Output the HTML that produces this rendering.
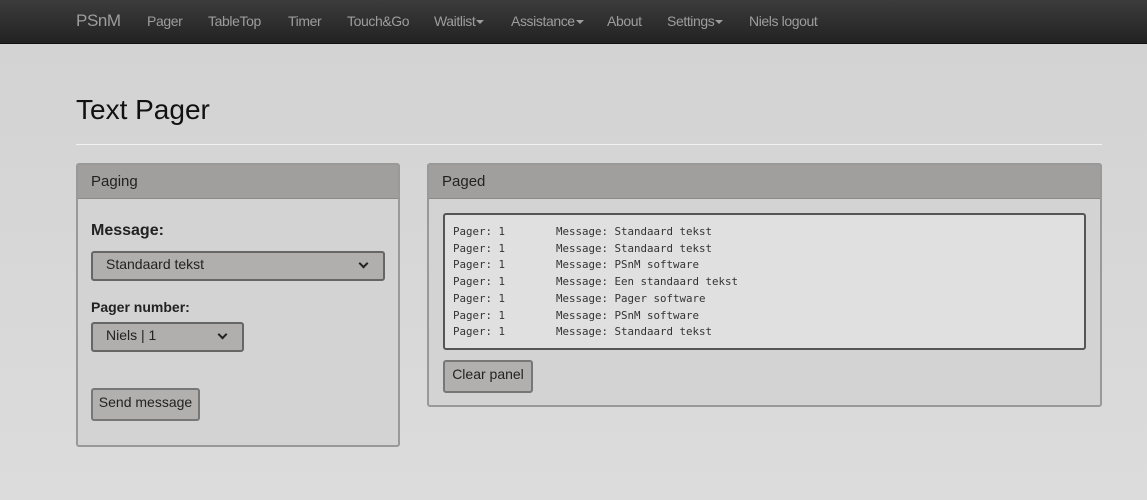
<!DOCTYPE html>
<html><head><meta charset="utf-8"><style>
*{box-sizing:border-box;margin:0;padding:0}
body{width:1147px;height:500px;overflow:hidden;font-family:"Liberation Sans",sans-serif;background:linear-gradient(#d2d2d2,#dcdcdc);position:relative;color:#222}
.nav{height:44px;background:linear-gradient(#3c3c3c,#222);border-bottom:1px solid #111;position:relative}
.nav span{position:absolute;top:13px;font-size:14px;color:#9d9d9d;letter-spacing:-0.4px}
.nav .brand{font-size:17px;top:11px;left:76px}
.caret{display:inline-block;border-top:4px solid #9d9d9d;border-left:4px solid transparent;border-right:4px solid transparent;vertical-align:middle;margin-left:1px}
h1{position:absolute;left:76px;top:94px;font-weight:normal;font-size:28px;color:#111}
.hr{position:absolute;left:76px;top:144px;width:1026px;height:1px;background:#f2f2f2}
.panel{position:absolute;border:2px solid #999;border-radius:3px;background:#d3d3d3}
.ph{height:34px;background:#a09f9d;border-bottom:1px solid #8a8a8a;font-size:15px;padding:8px 13px;color:#222}
.sel{position:absolute;background:#b0afad;border:2px solid #666;border-radius:3px;font-size:14px;padding:3px 13px}
.chev{position:absolute;right:16px;top:7px;width:7px;height:7px;border-right:2px solid #222;border-bottom:2px solid #222;transform:rotate(45deg)}
.btn{position:absolute;background:#b1b0ae;border:2px solid #777;border-radius:3px;font-size:14px;text-align:center;padding-top:4px;white-space:nowrap}
.log{position:absolute;left:14px;top:48px;width:643px;height:137px;border:2px solid #555;border-radius:3px;background:#e0e0e0;padding:9px 8px;font-family:"DejaVu Sans Mono","Liberation Mono",monospace;font-size:10.8px;line-height:16.7px;color:#333}
.log div span{display:inline-block;width:103px}
</style></head><body>
<div class="nav">
<span class="brand">PSnM</span>
<span style="left:147px">Pager</span>
<span style="left:208px">TableTop</span>
<span style="left:288px">Timer</span>
<span style="left:347px">Touch&amp;Go</span>
<span style="left:434px">Waitlist<i class="caret"></i></span>
<span style="left:511px">Assistance<i class="caret"></i></span>
<span style="left:607px">About</span>
<span style="left:667px">Settings<i class="caret"></i></span>
<span style="left:749px">Niels logout</span>
</div>
<h1>Text Pager</h1>
<div class="hr"></div>
<div class="panel" style="left:76px;top:163px;width:324px;height:284px">
<div class="ph">Paging</div>
<div style="position:absolute;left:13px;top:57px;font-size:16px;font-weight:bold">Message:</div>
<div class="sel" style="left:13px;top:86px;width:294px;height:30px">Standaard tekst<i class="chev"></i></div>
<div style="position:absolute;left:13px;top:134px;font-size:14px;font-weight:bold">Pager number:</div>
<div class="sel" style="left:13px;top:157px;width:153px;height:30px">Niels | 1<i class="chev"></i></div>
<div class="btn" style="left:13px;top:223px;width:109px;height:33px">Send message</div>
</div>
<div class="panel" style="left:427px;top:163px;width:675px;height:244px">
<div class="ph">Paged</div>
<div class="log">
<div><span>Pager: 1</span>Message: Standaard tekst</div>
<div><span>Pager: 1</span>Message: Standaard tekst</div>
<div><span>Pager: 1</span>Message: PSnM software</div>
<div><span>Pager: 1</span>Message: Een standaard tekst</div>
<div><span>Pager: 1</span>Message: Pager software</div>
<div><span>Pager: 1</span>Message: PSnM software</div>
<div><span>Pager: 1</span>Message: Standaard tekst</div>
</div>
<div class="btn" style="left:14px;top:195px;width:90px;height:33px;padding-left:0;padding-right:0">Clear panel</div>
</div>
</body></html>
